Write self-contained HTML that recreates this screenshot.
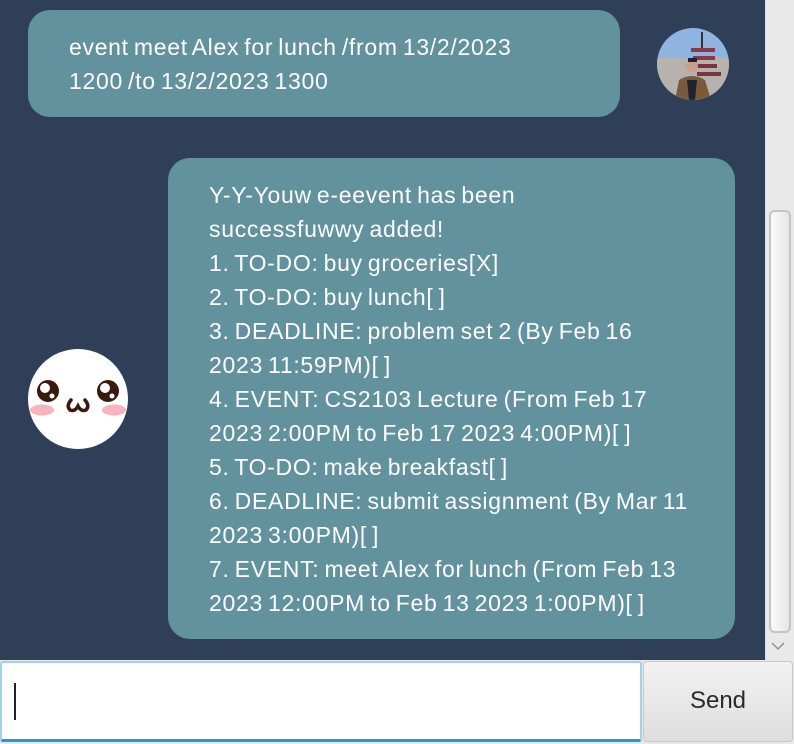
<!DOCTYPE html>
<html><head><meta charset="utf-8"><style>
*{margin:0;padding:0;box-sizing:border-box}
body{width:794px;height:744px;background:#2e3f57;position:relative;overflow:hidden;font-family:"Liberation Sans",sans-serif;color:#fff}
.b{position:absolute;background:#62929e;border-radius:22px}
.t{position:absolute;font-size:23px;line-height:34px;white-space:nowrap;letter-spacing:0.7px;word-spacing:-2px}
</style></head><body>
<div class="b" style="left:28px;top:10px;width:592px;height:107px"></div>
<div class="t" style="left:69px;top:30px">event meet Alex for lunch /from 13/2/2023<br>1200 /to 13/2/2023 1300</div>
<svg style="position:absolute;left:657px;top:28px" width="72" height="72" viewBox="0 0 72 72">
<defs><clipPath id="c"><circle cx="36" cy="36" r="36"/></clipPath></defs>
<g clip-path="url(#c)">
<rect width="72" height="72" fill="#8fb4df"/>
<rect y="30" width="72" height="42" fill="#b7b2ae"/>
<rect x="34" y="20" width="24" height="4" fill="#8a3a44"/>
<rect x="36" y="28" width="22" height="4" fill="#8a3a44"/>
<rect x="38" y="36" width="22" height="4" fill="#7a3440"/>
<rect x="40" y="44" width="24" height="4" fill="#7a3440"/>
<rect x="44" y="4" width="2" height="16" fill="#333"/>
<circle cx="35" cy="38" r="6" fill="#c7a08a"/>
<rect x="31" y="30" width="9" height="4" fill="#223"/>
<path d="M18 72 L22 52 Q35 44 48 52 L54 72Z" fill="#7b5a3c"/>
<path d="M30 52 L40 52 L38 72 L32 72Z" fill="#1f2330"/>
</g></svg>
<div class="b" style="left:168px;top:158px;width:567px;height:481px"></div>
<div class="t" style="left:209px;top:178px">Y-Y-Youw e-eevent has been<br>successfuwwy added!<br>1. TO-DO: buy groceries[X]<br>2. TO-DO: buy lunch[ ]<br>3. DEADLINE: problem set 2 (By Feb 16<br>2023 11:59PM)[ ]<br>4. EVENT: CS2103 Lecture (From Feb 17<br>2023 2:00PM to Feb 17 2023 4:00PM)[ ]<br>5. TO-DO: make breakfast[ ]<br>6. DEADLINE: submit assignment (By Mar 11<br>2023 3:00PM)[ ]<br>7. EVENT: meet Alex for lunch (From Feb 13<br>2023 12:00PM to Feb 13 2023 1:00PM)[ ]</div>
<svg style="position:absolute;left:28px;top:349px" width="100" height="100" viewBox="0 0 100 100">
<circle cx="50" cy="50" r="50" fill="#fff"/>
<ellipse cx="14" cy="61" rx="12" ry="5.5" fill="#f7b3be"/>
<ellipse cx="86" cy="61" rx="12" ry="5.5" fill="#f7b3be"/>
<circle cx="20" cy="42" r="11" fill="#3a1a0c"/>
<circle cx="80" cy="42" r="11" fill="#3a1a0c"/>
<circle cx="17" cy="39" r="5" fill="#fff"/><circle cx="24" cy="47" r="2.5" fill="#fff"/>
<circle cx="77" cy="39" r="5" fill="#fff"/><circle cx="84" cy="47" r="2.5" fill="#fff"/>
<path d="M43 51 Q38 57 42 61 Q47 63 50 57 Q53 63 58 61 Q62 57 57 51" fill="none" stroke="#3a1a0c" stroke-width="3.5" stroke-linecap="round"/>
</svg>
<div style="position:absolute;left:765px;top:0;width:29px;height:660px;background:#e9e9e9;border-left:1px solid #ddd"></div>
<div style="position:absolute;left:769px;top:210px;width:22px;height:423px;border:2px solid #c4c4c4;border-radius:6px;background:linear-gradient(90deg,#fafafa,#e6e6e6)"></div>
<svg style="position:absolute;left:770px;top:640px" width="16" height="12"><path d="M2 3 L8 9 L14 3" fill="none" stroke="#888" stroke-width="1.3"/></svg>
<div style="position:absolute;left:0;top:660px;width:794px;height:84px;background:#e8e8e8"></div>
<div style="position:absolute;left:0;top:661px;width:642px;height:81px;background:#fff;border:2px solid #9ed3ea;border-bottom:3px solid #1a9fd6;border-radius:3px"></div>
<div style="position:absolute;left:14px;top:683px;width:2px;height:37px;background:#222"></div>
<div style="position:absolute;left:643px;top:661px;width:150px;height:81px;border:1px solid #c8c8c8;border-radius:4px;background:linear-gradient(#f2f2f2,#dedede);color:#2a2a2a;font-size:24px;text-align:center;line-height:78px">Send</div>
</body></html>
